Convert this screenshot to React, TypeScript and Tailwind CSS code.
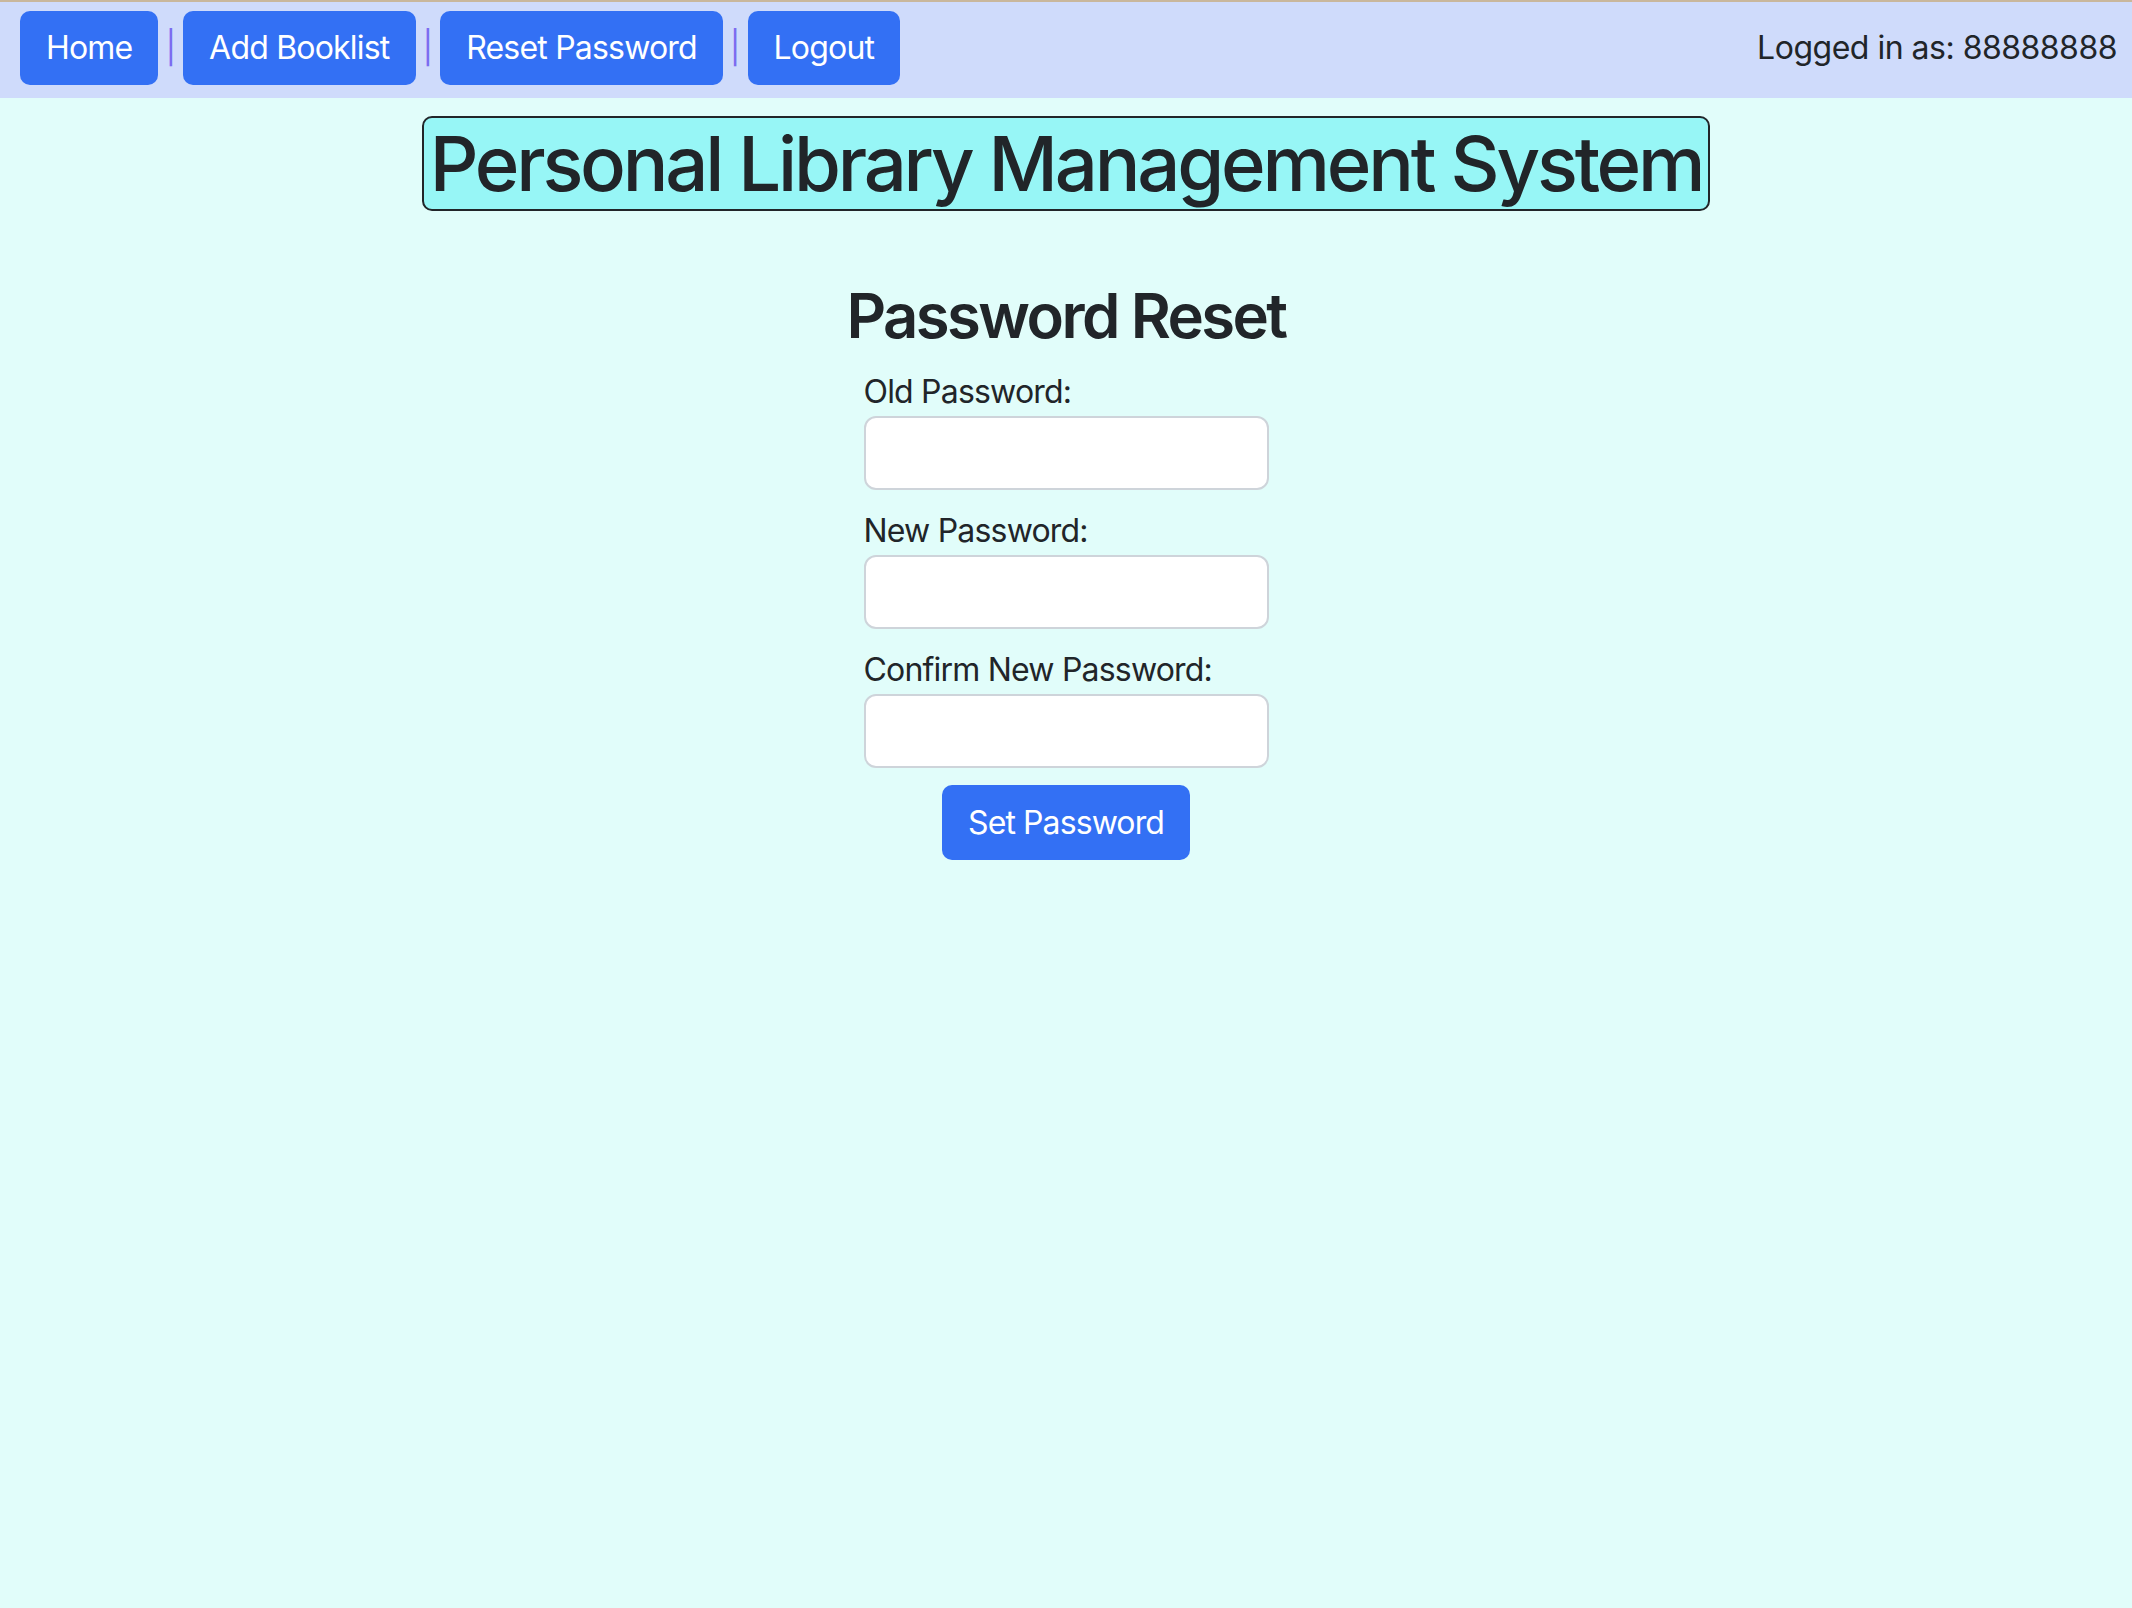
import React from 'react';

const navLinks = ['Home', 'Add Booklist', 'Reset Password', 'Logout'];

function NavButton({ label }: { label: string }) {
  return (
    <button
      type="button"
      className="h-[74px] rounded-[10px] bg-[#3370f4] px-[26px] text-[32px] leading-none tracking-[-0.8px] text-white"
    >
      {label}
    </button>
  );
}

function Field({ label }: { label: string }) {
  return (
    <div className="mb-[17px]">
      <label className="block text-[32px] leading-[48px] tracking-[-0.8px] text-[#212529]">{label}</label>
      <input
        type="password"
        className="block h-[74px] w-full rounded-[12px] border-2 border-[#ced4da] bg-white px-[24px] text-[32px] outline-none"
      />
    </div>
  );
}

export default function App() {
  return (
    <div className="min-h-screen bg-[#e1fdfa] font-['Inter','Noto_Sans',sans-serif] text-[#212529]">
      <nav className="flex items-center justify-between border-t-2 border-[#c9b79c] bg-[#cfdbfb] pb-[13px] pl-[20px] pr-[15px] pt-[9px]">
        <div className="flex items-center">
          {navLinks.map((link, i) => (
            <React.Fragment key={link}>
              {i > 0 && (
                <span className="mx-[7px] text-[32px] leading-none text-[#7b6cf0]">|</span>
              )}
              <NavButton label={link} />
            </React.Fragment>
          ))}
        </div>
        <span className="text-[32px] leading-[48px] tracking-[-0.5px]">Logged in as: 88888888</span>
      </nav>

      <main className="flex flex-col items-center">
        <h1 className="mt-[18px] rounded-[10px] border-2 border-[#212529] bg-[#97f6f6] px-[6px] text-[76px] font-medium leading-[1.2] tracking-[-3.2px]">
          Personal Library Management System
        </h1>
        <h2 className="mt-[68px] text-[61.6px] font-semibold leading-[1.2] tracking-[-2.6px]">Password Reset</h2>

        <form className="mt-[15px] flex w-[405px] flex-col">
          <Field label="Old Password:" />
          <Field label="New Password:" />
          <Field label="Confirm New Password:" />
          <button
            type="button"
            className="mx-auto h-[75px] rounded-[10px] bg-[#3370f4] px-[26px] text-[32px] leading-none tracking-[-0.9px] text-white"
          >
            Set Password
          </button>
        </form>
      </main>
    </div>
  );
}
